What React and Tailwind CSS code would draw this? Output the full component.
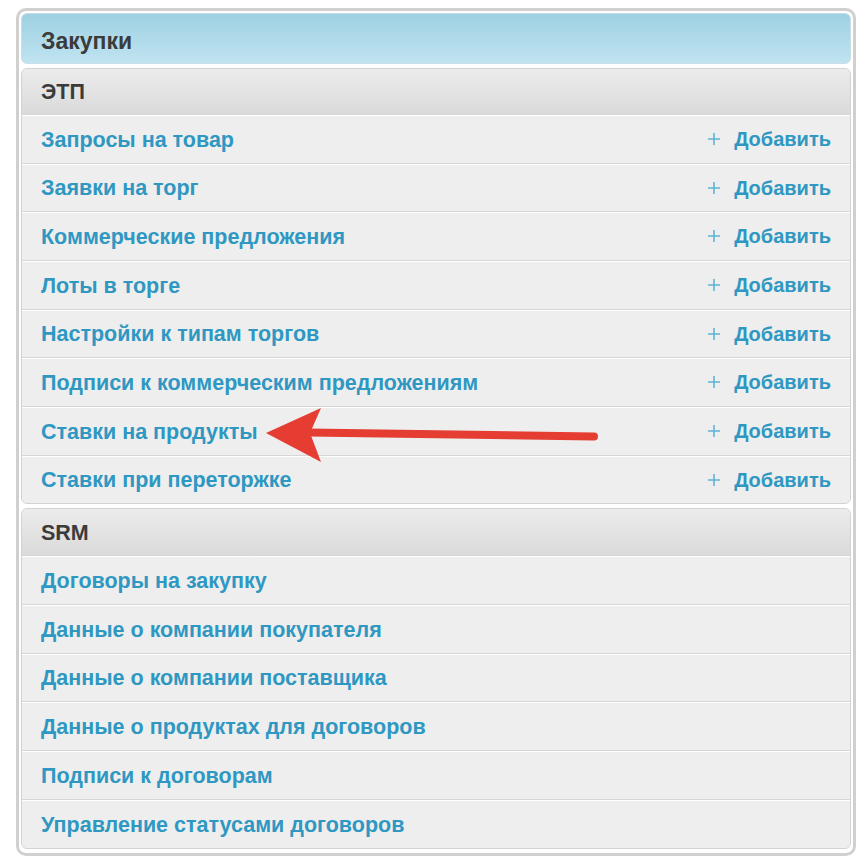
import React from "react";

const etp = [
  ["Запросы на товар", 49],
  ["Заявки на торг", 48],
  ["Коммерческие предложения", 49],
  ["Лоты в торге", 49],
  ["Настройки к типам торгов", 48],
  ["Подписи к коммерческим предложениям", 49],
  ["Ставки на продукты", 49],
  ["Ставки при переторжке", 48],
];

const srm = [
  ["Договоры на закупку", 49],
  ["Данные о компании покупателя", 49],
  ["Данные о компании поставщика", 48],
  ["Данные о продуктах для договоров", 49],
  ["Подписи к договорам", 49],
  ["Управление статусами договоров", 49],
];

function Row({ label, h, add }) {
  return (
    <div
      className="flex items-center justify-between border-t border-[#d6d6d6] shadow-[inset_0_1px_0_#ffffff] pl-[19px] pr-[19px] bg-[#eeeeee]"
      style={{ height: h }}
    >
      <span className="pt-[3px] text-[21.5px] font-bold text-[#2f98c2] leading-none">{label}</span>
      {add && (
        <span className="flex items-center text-[20px] font-bold text-[#2f98c2] leading-none">
          <svg width="14" height="14" viewBox="0 0 14 14" className="mr-[13px]">
            <path d="M7 1v12M1 7h12" stroke="#5fb3d3" strokeWidth="1.6" />
          </svg>
          Добавить
        </span>
      )}
    </div>
  );
}

function Section({ title, rows, add, headerH }) {
  return (
    <div className="rounded-[6px] border border-[#d2d2d2] overflow-hidden bg-[#eeeeee]">
      <div
        className="flex items-center pl-[19px] pt-[3px] bg-gradient-to-b from-[#ececec] to-[#dadada] text-[21.5px] font-bold text-[#3b3b3b] leading-none"
        style={{ height: headerH }}
      >
        {title}
      </div>
      {rows.map(([l, h]) => (
        <Row key={l} label={l} h={h} add={add} />
      ))}
    </div>
  );
}

export default function App() {
  return (
    <div
      className="relative w-[866px] h-[864px] bg-white"
      style={{ fontFamily: '"Liberation Sans", Arial, sans-serif' }}
    >
      <div className="absolute left-0 top-0 pt-[8px] pl-[16px]">
        <div className="w-[840px] border-[3px] border-[#d0d0d0] rounded-[10px] bg-white p-[2px] pb-[4px] flex flex-col gap-[4px]">
          <div className="h-[51px] rounded-[6px] border border-[#c9dfe7] bg-gradient-to-b from-[#9ed0e3] to-[#c0e4f0] flex items-center pl-[19px] pt-[5px] text-[23px] font-bold text-[#3b3b3b] leading-none">
            Закупки
          </div>
          <Section title="ЭТП" rows={etp} add headerH={45} />
          <Section title="SRM" rows={srm} headerH={46} />
        </div>
      </div>
      <svg
        className="absolute left-0 top-0 pointer-events-none"
        width="866"
        height="864"
        viewBox="0 0 866 864"
      >
        <line x1="308" y1="432.5" x2="594" y2="436.5" stroke="#e53d31" strokeWidth="8" strokeLinecap="round" />
        <path d="M266 433 L321 408 L310 433 L321 462 Z" fill="#e53d31" />
      </svg>
    </div>
  );
}
